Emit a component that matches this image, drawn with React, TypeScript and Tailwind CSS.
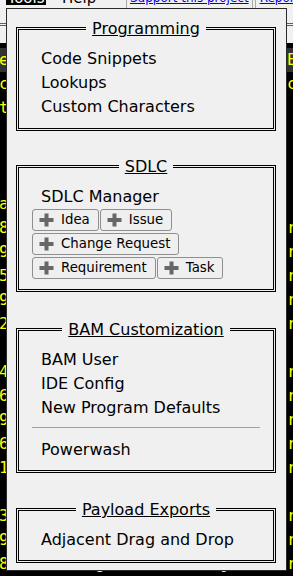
import type { ReactNode } from 'react'

// editor lines peeking out on both sides of the dropdown
const LINES: { l: string; r: string; hl?: boolean }[] = [
  { l: 'e', r: 'E', hl: true },
  { l: 'c', r: 'c' },
  { l: 't', r: '' },
  { l: '', r: '' },
  { l: '', r: '' },
  { l: '', r: '' },
  { l: 'a', r: '' },
  { l: '8', r: 'r' },
  { l: '9', r: 'r' },
  { l: '5', r: 'r' },
  { l: '9', r: 'r' },
  { l: '2', r: 'r' },
  { l: '', r: '' },
  { l: '4', r: 'r' },
  { l: '6', r: 'r' },
  { l: '9', r: 'r' },
  { l: '6', r: 'r' },
  { l: '1', r: 'r' },
  { l: '', r: '' },
  { l: '3', r: 'r' },
  { l: '9', r: 'r' },
  { l: '8,        g ,      ,   j,', r: 'r' },
]

function Plus() {
  return (
    <svg width="15" height="14" viewBox="0 0 15 14" className="shrink-0">
      <path d="M5.5 0.5h4v4.5h5v4h-5v4.5h-4V9h-5V5h5z" fill="#676767" />
    </svg>
  )
}

function AddButton({ label }: { label: string }) {
  return (
    <button className="flex h-[22px] items-center gap-[7px] rounded-[3px] border border-[#8f8f8f] bg-[#efefef] pl-[6px] pr-[8px] text-[13.33px] leading-none text-black">
      <Plus />
      {label}
    </button>
  )
}

function Group({ title, className, children }: { title: string; className: string; children: ReactNode }) {
  return (
    <fieldset className={`ml-[9px] w-[260px] border-[3px] border-double border-black px-[13px] pt-[8px] ${className}`}>
      <legend className="mx-auto px-[6px] text-[16px] leading-[19px] text-black underline">{title}</legend>
      {children}
    </fieldset>
  )
}

function Item({ children }: { children: ReactNode }) {
  return <div className="h-6 pl-[9px] pt-px text-[16px] leading-6 text-black">{children}</div>
}

export default function App() {
  return (
    <div className="relative h-[576px] w-[293px] overflow-hidden bg-black font-['DejaVu_Sans',sans-serif]">
      {/* top bar + tab strip */}
      <div className="h-[43px] bg-[#f0f0f0]">
        <div className="h-[8px] overflow-hidden">
          <div className="-mt-[11px] flex h-[19px] items-start whitespace-nowrap text-[15px] leading-[18px]">
            <div className="ml-[6px] h-[16px] w-[40px] shrink-0 overflow-hidden bg-black text-center text-white">Tools</div>
            <div className="ml-[16px] w-[64px] shrink-0 text-black">Help</div>
            <div className="flex h-[19px] shrink-0 border-x border-[#a9a9a9] pl-[3px] pr-[3px] text-[12px] leading-[19px] text-[#0000ee] underline">
              Support this project
            </div>
            <div className="ml-[2px] flex h-[19px] shrink-0 border-l border-[#a9a9a9] pl-[4px] text-[12px] leading-[19px] text-[#0000ee] underline">
              Report a bug
            </div>
          </div>
        </div>
        <div className="mt-[15px] border-t-[3px] border-double border-[#2a7a60]" />
      </div>

      {/* editor */}
      <div className="pt-[5px] font-['DejaVu_Sans_Mono',monospace] text-[16px] text-[#ffff00]">
        {LINES.map((ln, i) => (
          <div key={i} className={`flex h-6 items-center justify-between leading-6 ${ln.hl ? 'bg-[#333333]' : ''}`}>
            <span className="-ml-[1px] whitespace-pre">{ln.l}</span>
            <span className="w-[6px] shrink-0 overflow-hidden whitespace-pre">{ln.r}</span>
          </div>
        ))}
      </div>

      {/* Tools dropdown */}
      <div className="absolute left-[6px] top-[8px] h-[563px] w-[281px] border border-[#2b2b2b] bg-[#f0f0f0]">
        <Group title="Programming" className="mt-[10px] pb-[10px]">
          <Item>Code Snippets</Item>
          <Item>Lookups</Item>
          <Item>Custom Characters</Item>
        </Group>

        <Group title="SDLC" className="mt-[26px] pb-[9px]">
          <Item>SDLC Manager</Item>
          <div className="flex h-6 items-center gap-[1px]">
            <AddButton label="Idea" />
            <AddButton label="Issue" />
          </div>
          <div className="flex h-6 items-center gap-[1px]">
            <AddButton label="Change Request" />
          </div>
          <div className="flex h-6 items-center gap-[1px]">
            <AddButton label="Requirement" />
            <AddButton label="Task" />
          </div>
        </Group>

        <Group title="BAM Customization" className="mt-[28px] pb-[9px]">
          <Item>BAM User</Item>
          <Item>IDE Config</Item>
          <Item>New Program Defaults</Item>
          <div className="mb-[9px] mt-2 h-px bg-[#a0a0a0]" />
          <Item>Powerwash</Item>
        </Group>

        <Group title="Payload Exports" className="mt-[27px] pb-[9px]">
          <Item>Adjacent Drag and Drop</Item>
        </Group>
      </div>
    </div>
  )
}
